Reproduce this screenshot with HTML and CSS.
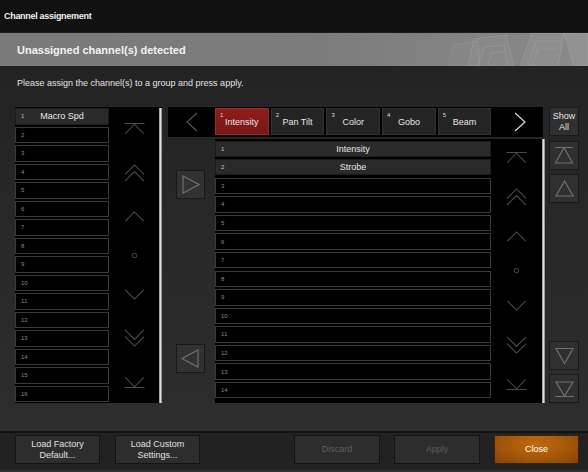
FILE: index.html
```html
<!DOCTYPE html>
<html lang="en">
<head>
    <meta charset="UTF-8">
    <title>Channel assignement</title>
    <link rel="stylesheet" href="styles.css">
</head>
<body>
    <!-- icon set -->
    <svg class="defs" width="0" height="0">
        <symbol id="i-top" viewBox="0 0 22 12"><path d="M0 0.6H22M1 11.5L11 1.2L21 11.5"/></symbol>
        <symbol id="i-dup" viewBox="0 0 22 19"><path d="M1 11L11 1L21 11M1 18L11 8L21 18"/></symbol>
        <symbol id="i-up" viewBox="0 0 22 12"><path d="M1 11L11 1L21 11"/></symbol>
        <symbol id="i-dot" viewBox="0 0 8 8"><circle cx="4" cy="4" r="2.6"/></symbol>
        <symbol id="i-down" viewBox="0 0 22 12"><path d="M1 1L11 11L21 1"/></symbol>
        <symbol id="i-ddown" viewBox="0 0 22 19"><path d="M1 1L11 11L21 1M1 8L11 18L21 8"/></symbol>
        <symbol id="i-bottom" viewBox="0 0 22 12"><path d="M0 11.4H22M1 0.5L11 10.8L21 0.5"/></symbol>
    </svg>

    <div class="window">
        <div class="titlebar">Channel assignement</div>

        <div class="banner">
            <span>Unassigned channel(s) detected</span>
            <svg class="banner-art" width="260" height="33" viewBox="0 0 260 33">
                <path d="M120 33L126 12L150 8L152 33Z" fill="rgba(255,255,255,0.03)" stroke="rgba(255,255,255,0.08)"/>
                <path d="M140 33L146 6L178 2L186 33Z" fill="rgba(255,255,255,0.04)" stroke="rgba(255,255,255,0.11)"/>
                <path d="M150 33L156 14L176 12L180 33M160 33L163 20L175 19" fill="none" stroke="rgba(255,255,255,0.1)"/>
                <path d="M192 33L204 0H236L230 33Z" fill="rgba(255,255,255,0.05)" stroke="rgba(255,255,255,0.13)"/>
                <path d="M200 33L208 8H232M204 33L210 16H228" fill="none" stroke="rgba(255,255,255,0.1)"/>
                <path d="M236 0L260 0L260 33L246 33Z" fill="rgba(255,255,255,0.07)" stroke="rgba(255,255,255,0.12)"/>
            </svg>
        </div>

        <p class="hint">Please assign the channel(s) to a group and press apply.</p>

        <div class="main">
            <!-- Canaux non assignés -->
            <div class="panel left-panel">
                <div class="cells cells-16">
                    <div class="cell filled"><span class="num">1</span>Macro Spd</div>
                    <div class="cell"><span class="num">2</span></div>
                    <div class="cell"><span class="num">3</span></div>
                    <div class="cell"><span class="num">4</span></div>
                    <div class="cell"><span class="num">5</span></div>
                    <div class="cell"><span class="num">6</span></div>
                    <div class="cell"><span class="num">7</span></div>
                    <div class="cell"><span class="num">8</span></div>
                    <div class="cell"><span class="num">9</span></div>
                    <div class="cell"><span class="num">10</span></div>
                    <div class="cell"><span class="num">11</span></div>
                    <div class="cell"><span class="num">12</span></div>
                    <div class="cell"><span class="num">13</span></div>
                    <div class="cell"><span class="num">14</span></div>
                    <div class="cell"><span class="num">15</span></div>
                    <div class="cell"><span class="num">16</span></div>
                </div>
                <div class="scroller">
                    <svg class="ic" width="21" height="11"><use href="#i-top"/></svg>
                    <svg class="ic" width="21" height="18"><use href="#i-dup"/></svg>
                    <svg class="ic" width="21" height="11"><use href="#i-up"/></svg>
                    <svg class="ic" width="7" height="7"><use href="#i-dot"/></svg>
                    <svg class="ic" width="21" height="11"><use href="#i-down"/></svg>
                    <svg class="ic" width="21" height="18"><use href="#i-ddown"/></svg>
                    <svg class="ic" width="21" height="11"><use href="#i-bottom"/></svg>
                </div>
                <div class="scrollbar"></div>
            </div>

            <!-- Groupes -->
            <div class="groups">
                <div class="tabbar">
                    <div class="tab-nav prev">
                        <svg width="12" height="20" viewBox="0 0 12 20"><path d="M11 1L1 10L11 19"/></svg>
                    </div>
                    <div class="tab active"><span class="tnum">1</span>Intensity</div>
                    <div class="tab"><span class="tnum">2</span>Pan Tilt</div>
                    <div class="tab"><span class="tnum">3</span>Color</div>
                    <div class="tab"><span class="tnum">4</span>Gobo</div>
                    <div class="tab"><span class="tnum">5</span>Beam</div>
                    <div class="tab-nav next">
                        <svg width="12" height="20" viewBox="0 0 12 20"><path d="M1 1L11 10L1 19"/></svg>
                    </div>
                </div>

                <div class="groups-body">
                    <div class="move-col">
                        <button class="tri-btn to-group">
                            <svg width="29" height="29" viewBox="0 0 29 29"><path d="M7 6L23 14.5L7 23Z"/></svg>
                        </button>
                        <button class="tri-btn to-free">
                            <svg width="29" height="29" viewBox="0 0 29 29"><path d="M22 6L6 14.5L22 23Z"/></svg>
                        </button>
                    </div>

                    <div class="panel right-panel">
                        <div class="cells cells-14">
                            <div class="cell filled"><span class="num">1</span>Intensity</div>
                            <div class="cell filled"><span class="num">2</span>Strobe</div>
                            <div class="cell"><span class="num">3</span></div>
                            <div class="cell"><span class="num">4</span></div>
                            <div class="cell"><span class="num">5</span></div>
                            <div class="cell"><span class="num">6</span></div>
                            <div class="cell"><span class="num">7</span></div>
                            <div class="cell"><span class="num">8</span></div>
                            <div class="cell"><span class="num">9</span></div>
                            <div class="cell"><span class="num">10</span></div>
                            <div class="cell"><span class="num">11</span></div>
                            <div class="cell"><span class="num">12</span></div>
                            <div class="cell"><span class="num">13</span></div>
                            <div class="cell"><span class="num">14</span></div>
                        </div>
                        <div class="scroller">
                            <svg class="ic" width="21" height="11"><use href="#i-top"/></svg>
                            <svg class="ic" width="21" height="18"><use href="#i-dup"/></svg>
                            <svg class="ic" width="21" height="11"><use href="#i-up"/></svg>
                            <svg class="ic" width="7" height="7"><use href="#i-dot"/></svg>
                            <svg class="ic" width="21" height="11"><use href="#i-down"/></svg>
                            <svg class="ic" width="21" height="18"><use href="#i-ddown"/></svg>
                            <svg class="ic" width="21" height="11"><use href="#i-bottom"/></svg>
                        </div>
                        <div class="scrollbar"></div>
                    </div>
                </div>
            </div>

            <!-- Colonne de droite -->
            <div class="side-col">
                <button class="side-btn show-all">Show<br>All</button>
                <button class="side-btn first">
                    <svg width="30" height="29" viewBox="0 0 30 29"><path d="M6 6.5H24M15 6.5L6.5 22H23.5Z"/></svg>
                </button>
                <button class="side-btn">
                    <svg width="30" height="29" viewBox="0 0 30 29"><path d="M15.5 7L7 22H24Z"/></svg>
                </button>
                <div class="spacer"></div>
                <button class="side-btn">
                    <svg width="30" height="29" viewBox="0 0 30 29"><path d="M7 7.5H24L15.5 22.5Z"/></svg>
                </button>
                <button class="side-btn last">
                    <svg width="30" height="29" viewBox="0 0 30 29"><path d="M7 8H24L15.5 22ZM6 22.5H25"/></svg>
                </button>
            </div>
        </div>

        <div class="footer">
            <button class="btn">Load Factory<br>Default...</button>
            <button class="btn">Load Custom<br>Settings...</button>
            <button class="btn disabled push">Discard</button>
            <button class="btn disabled">Apply</button>
            <button class="btn close">Close</button>
        </div>
    </div>
</body>
</html>
```

FILE: styles.css
```css
/* Fenêtre d'assignation des canaux */
body {
    margin: 0;
    background-color: #1a1a1a;
    font-family: "Liberation Sans", Arial, sans-serif;
}
.defs {
    position: absolute;
}
.window {
    width: 588px;
    height: 472px;
    display: flex;
    flex-direction: column;
    background: linear-gradient(#212121, #2f2f2f);
    overflow: hidden;
}
.titlebar {
    height: 33px;
    box-sizing: border-box;
    border-bottom: 1px solid #1b1b1b;
    background-color: #111;
    color: #eee;
    font-size: 9px;
    font-weight: bold;
    letter-spacing: -0.3px;
    padding-left: 4px;
    display: flex;
    align-items: center;
    flex: none;
}
.banner {
    position: relative;
    height: 33px;
    flex: none;
    display: flex;
    align-items: center;
    padding-left: 17px;
    background: linear-gradient(90deg, #7a7a7a 0%, #7c7c7c 55%, #8a8a8a 100%);
    color: #f2f2f2;
    font-size: 11px;
    font-weight: bold;
}
.banner-art {
    position: absolute;
    right: 0;
    top: 0;
}
.hint {
    margin: 0;
    height: 41px;
    flex: none;
    box-sizing: border-box;
    padding: 12px 0 0 17px;
    font-size: 9px;
    color: #e4e4e4;
}

/* Zone principale */
.main {
    display: flex;
    height: 296px;
    flex: none;
    padding-left: 15px;
}
.panel {
    display: flex;
    background-color: #000;
}
.left-panel {
    width: 147px;
    padding-top: 1px;
    box-sizing: border-box;
}
.cells {
    display: grid;
    align-content: start;
}
.cells-16 {
    width: 94px;
    grid-template-rows: repeat(16, 16.5px);
    row-gap: 2px;
}
.cells-14 {
    width: 276px;
    padding-top: 1.5px;
    grid-template-rows: repeat(14, 16.4px);
    row-gap: 2.2px;
}
.cell {
    position: relative;
    box-sizing: border-box;
    border: 1px solid #3a3a3a;
    background-color: #000;
    color: #e8e8e8;
    font-size: 9px;
    display: flex;
    align-items: center;
    justify-content: center;
}
.cell.filled {
    background-color: #2a2a2a;
    border-color: #1c1c1c;
}
.num {
    position: absolute;
    left: 5px;
    top: 50%;
    transform: translateY(-55%);
    font-size: 6px;
    color: #8a8a8a;
}
.filled .num {
    color: #c4c4c4;
}
.scroller {
    flex: 1;
    display: flex;
    flex-direction: column;
    align-items: center;
    justify-content: space-around;
}
.ic {
    fill: none;
    stroke: #4c4c4c;
    stroke-width: 1.1;
}
.scrollbar {
    width: 3px;
    background: linear-gradient(90deg, #777, #e6e6e6 40%, #cfcfcf 70%, #555);
}

/* Groupes */
.groups {
    width: 377px;
    margin-left: 6px;
    display: flex;
    flex-direction: column;
}
.tabbar {
    width: 375px;
    height: 30px;
    box-sizing: border-box;
    padding-top: 1px;
    background-color: #000;
    display: flex;
    align-items: flex-start;
}
.tab-nav {
    height: 27px;
    display: flex;
    align-items: center;
    justify-content: center;
}
.tab-nav svg {
    fill: none;
    stroke-width: 1.1;
}
.tab-nav.prev {
    width: 47px;
}
.tab-nav.prev svg {
    stroke: #555;
    margin-left: 1px;
}
.tab-nav.next {
    flex: 1;
}
.tab-nav.next svg {
    stroke: #e0e0e0;
    margin-left: 6px;
}
.tab {
    position: relative;
    width: 53.7px;
    height: 27px;
    margin-right: 2px;
    box-sizing: border-box;
    border: 1px solid #333;
    background-color: #242424;
    color: #e6e6e6;
    font-size: 9px;
    display: flex;
    align-items: center;
    justify-content: center;
}
.tab:nth-last-child(2) {
    margin-right: 0;
}
.tab.active {
    background: linear-gradient(#8e1d1d, #7a1717);
    border-color: #9c2a2a;
}
.tnum {
    position: absolute;
    left: 4px;
    top: 3px;
    font-size: 6px;
    color: #ddd;
}
.groups-body {
    display: flex;
    height: 264px;
    margin-top: 2px;
}
.move-col {
    width: 47px;
}
.tri-btn {
    display: block;
    width: 29px;
    height: 29px;
    padding: 0;
    margin-left: 8px;
    border: 1px solid #191919;
    background-color: #323232;
    cursor: pointer;
}
.tri-btn svg {
    display: block;
    margin: -1px;
    fill: none;
    stroke: #707070;
    stroke-width: 1.2;
}
.to-group {
    margin-top: 31px;
}
.to-free {
    margin-top: 145px;
}
.right-panel {
    width: 330px;
}

/* Boutons latéraux */
.side-col {
    width: 30px;
    margin-left: 4px;
    display: flex;
    flex-direction: column;
}
.side-btn {
    height: 29px;
    padding: 0;
    border: 1px solid #191919;
    background-color: #303030;
    cursor: pointer;
    flex: none;
}
.side-btn svg {
    display: block;
    margin: -1px;
    fill: none;
    stroke: #707070;
    stroke-width: 1.2;
}
.side-btn + .side-btn {
    margin-top: 4px;
}
.side-btn.first {
    margin-top: 5px;
}
.show-all {
    color: #e2e2e2;
    font-family: "Liberation Sans", Arial, sans-serif;
    font-size: 9px;
    line-height: 11px;
}
.spacer {
    flex: 1;
}

/* Pied de page */
.footer {
    margin-top: 28px;
    border-top: 2px solid #131313;
    height: 39px;
    flex: none;
    box-sizing: border-box;
    padding: 2px 9px 0 15px;
    background-color: #222;
    display: flex;
    align-items: flex-start;
}
.btn {
    width: 85px;
    height: 29px;
    margin-right: 15px;
    padding: 0;
    border: 1px solid #141414;
    background-color: #2d2d2d;
    color: #e0e0e0;
    font-family: "Liberation Sans", Arial, sans-serif;
    font-size: 9px;
    line-height: 11px;
    cursor: pointer;
}
.btn.push {
    margin-left: auto;
}
.btn.disabled {
    width: 86px;
    margin-right: 14px;
    color: #5e5e5e;
}
.btn.close {
    margin-right: 0;
    color: #fff;
    border-color: #3a2206;
    background: radial-gradient(ellipse at 50% 30%, #c06a10 0%, #a5560a 55%, #874305 100%);
}
```
